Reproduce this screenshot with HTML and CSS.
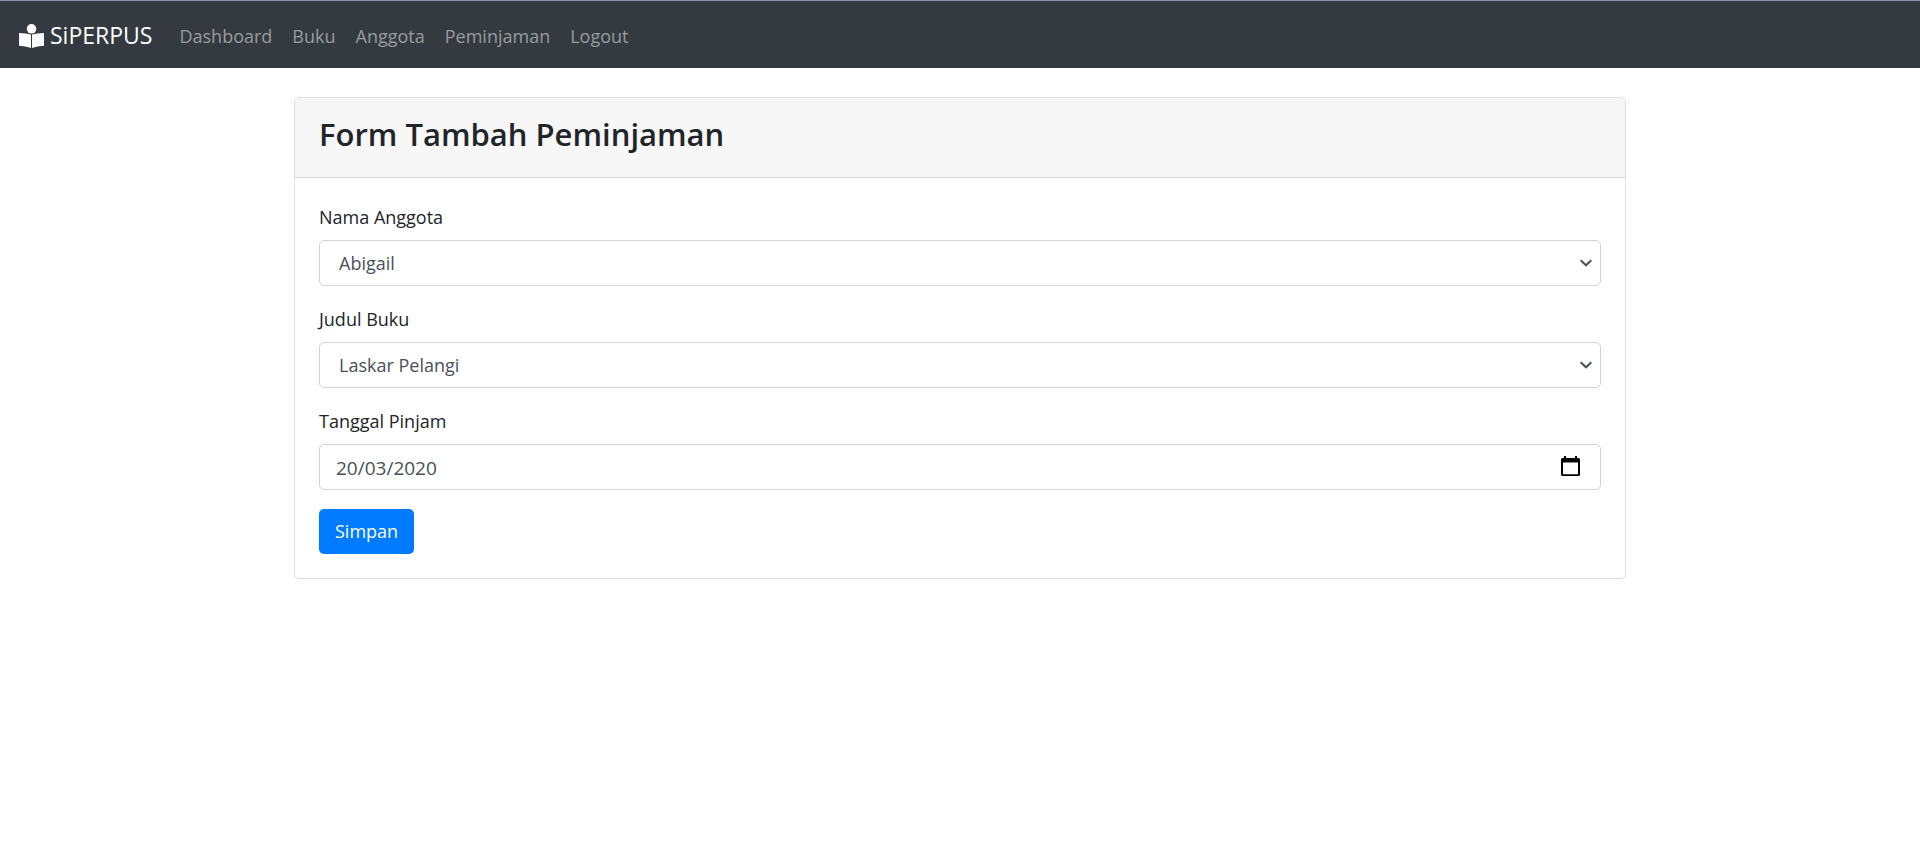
FILE: index.html
```html
<!DOCTYPE html>
<html lang="id">
<head>
<meta charset="utf-8">
<meta name="viewport" content="width=device-width, initial-scale=1">
<title>SiPERPUS</title>
<link rel="stylesheet" href="styles.css">
</head>
<body>
<nav class="navbar">
  <a class="brand" href="#">
    <svg class="brand-icon" viewBox="0 0 25 24" aria-hidden="true">
      <circle cx="12.5" cy="4.8" r="4.8"/>
      <path d="M0 9Q7 9 12 10.6V24Q7 22.2 0 21.8zM25 9Q18 9 13 10.6V24Q18 22.2 25 21.8z"/>
    </svg>
    <span>SiPERPUS</span>
  </a>
  <div class="nav-links">
    <a href="#">Dashboard</a>
    <a href="#">Buku</a>
    <a href="#">Anggota</a>
    <a href="#">Peminjaman</a>
    <a href="#">Logout</a>
  </div>
</nav>
<main class="container">
  <section class="card">
    <header class="card-header"><h1>Form Tambah Peminjaman</h1></header>
    <form class="card-body">
      <div class="form-group">
        <label for="anggota">Nama Anggota</label>
        <select class="control" id="anggota"><option>Abigail</option></select>
      </div>
      <div class="form-group">
        <label for="buku">Judul Buku</label>
        <select class="control" id="buku"><option>Laskar Pelangi</option></select>
      </div>
      <div class="form-group">
        <label for="tanggal">Tanggal Pinjam</label>
        <input class="control date" id="tanggal" type="text" value="20/03/2020">
      </div>
      <button class="btn" type="submit">Simpan</button>
    </form>
  </section>
</main>
</body>
</html>
```
FILE: styles.css
```css
* { box-sizing: border-box; }

body {
  margin: 0;
  background: #fff;
  color: #212529;
  font: 18px/29px "Open Sans", "Noto Sans", sans-serif;
}

.navbar {
  display: flex;
  align-items: center;
  gap: 27px;
  padding: 14px 19px 12px;
  border-top: 1px solid #8f94a8;
  background: #343a40;
}

.brand {
  display: flex;
  align-items: center;
  gap: 6px;
  color: #fff;
  font-size: 23px;
  line-height: 41px;
  text-decoration: none;
}

.brand-icon {
  width: 25px;
  height: 24px;
  fill: currentColor;
}

.nav-links {
  display: flex;
  gap: 20px;
  padding-top: 2px;
}

.nav-links a {
  color: #999c9f;
  text-decoration: none;
}

.container {
  max-width: 1368px;
  margin: 0 auto;
  padding: 29px 18px;
}

.card {
  border: 1px solid #dfdfdf;
  border-radius: 5px;
}

.card-header {
  padding: 16px 24px 22px;
  border-bottom: 1px solid #dadada;
  border-radius: 4px 4px 0 0;
  background: #f7f7f7;
}

.card-header h1 {
  margin: 0;
  font-size: 31px;
  font-weight: 600;
  line-height: 41px;
}

.card-body { padding: 25px 24px 24px; }

.form-group {
  display: grid;
  gap: 8px;
  margin-bottom: 19px;
}

.control {
  width: 100%;
  height: 46px;
  padding: 2px 16px 0;
  border: 1px solid #ced4da;
  border-radius: 5px;
  appearance: none;
  background: #fff no-repeat;
  color: #495057;
  font: inherit;
}

select.control {
  padding: 0 19px;
  background-image: url("data:image/svg+xml,%3Csvg xmlns='http://www.w3.org/2000/svg' viewBox='0 0 12 8'%3E%3Cpath d='M.7 1.2 6 6.3l5.3-5.1' fill='none' stroke='%23495057' stroke-width='2'/%3E%3C/svg%3E");
  background-position: right 8px center;
  background-size: 12px 8px;
}

.date {
  font-size: 19px;
  background-image: url("data:image/svg+xml,%3Csvg xmlns='http://www.w3.org/2000/svg' viewBox='0 0 19 20'%3E%3Cpath fill-rule='evenodd' d='M3 0h2v2h9V0h2v2h1.500Q19 2 19 3.500V18.500Q19 20 17.500 20H1.500Q0 20 0 18.500V3.500Q0 2 1.500 2H3zM2 6.500V18.300H17V6.500z'/%3E%3C/svg%3E");
  background-position: right 20px top 11px;
  background-size: 19px 20px;
}

.btn {
  display: block;
  height: 45px;
  padding: 0 16px;
  border: 0;
  border-radius: 5px;
  background: #007bff;
  color: #fff;
  font: inherit;
}
```
